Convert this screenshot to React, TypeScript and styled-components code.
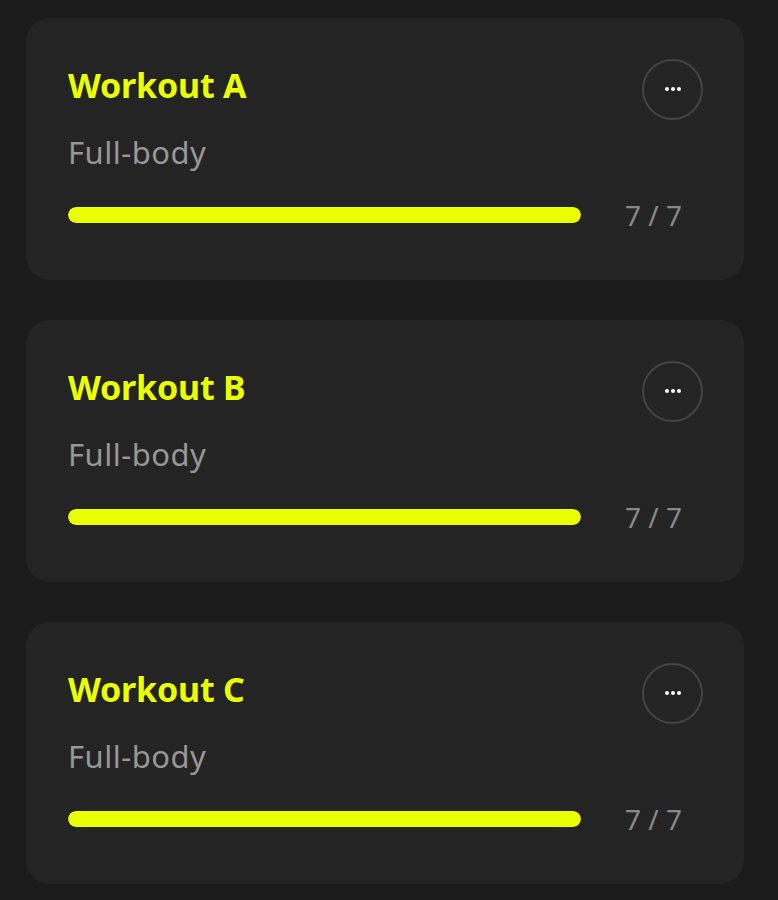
import React from "react";
import styled, { createGlobalStyle } from "styled-components";

const Global = createGlobalStyle`
  html, body { margin: 0; padding: 0; background: #1b1b1b; }
  body { font-family: "Noto Sans", "Open Sans", sans-serif; }
`;

const Page = styled.div`
  display: flex;
  flex-direction: column;
  gap: 40px;
  padding: 18px 34px 16px 26px;
`;

const Card = styled.div`
  background: #242424;
  border-radius: 24px;
  height: 262px;
  box-sizing: border-box;
  padding: 41px 41px 0 42px;
  display: flex;
  flex-direction: column;
`;

const Header = styled.div`
  display: flex;
  justify-content: space-between;
  align-items: center;
  height: 60px;
`;

const Title = styled.h2`
  margin: 0;
  color: #eaff00;
  font-size: 34px;
  font-weight: 700;
  letter-spacing: -0.2px;
  margin-top: -8px;
`;

const MoreButton = styled.button`
  width: 61px;
  height: 61px;
  border-radius: 50%;
  border: 2px solid #454545;
  background: transparent;
  display: flex;
  align-items: center;
  justify-content: center;
  gap: 2px;
  padding: 0;
`;

const Dot = styled.span`
  width: 4px;
  height: 4px;
  border-radius: 50%;
  background: #fff;
`;

const Subtitle = styled.div`
  color: #979797;
  font-size: 31px;
  margin-top: 11px;
  line-height: 44px;
  letter-spacing: 0.5px;
`;

const ProgressRow = styled.div`
  display: flex;
  align-items: center;
  margin-top: 22px;
`;

const Track = styled.div`
  width: 513px;
  height: 16px;
  border-radius: 8px;
  background: #343434;
  overflow: hidden;
`;

const Fill = styled.div`
  height: 100%;
  border-radius: 8px;
  background: #eaff00;
`;

const Count = styled.div`
  color: #888;
  font-size: 28px;
  margin-left: 44px;
`;

const workouts = [
  { name: "Workout A", type: "Full-body", done: 7, total: 7 },
  { name: "Workout B", type: "Full-body", done: 7, total: 7 },
  { name: "Workout C", type: "Full-body", done: 7, total: 7 },
];

export default function App() {
  return (
    <>
      <Global />
      <Page>
        {workouts.map((w) => (
          <Card key={w.name}>
            <Header>
              <Title>{w.name}</Title>
              <MoreButton aria-label="More">
                <Dot />
                <Dot />
                <Dot />
              </MoreButton>
            </Header>
            <Subtitle>{w.type}</Subtitle>
            <ProgressRow>
              <Track>
                <Fill style={{ width: `${(w.done / w.total) * 100}%` }} />
              </Track>
              <Count>
                {w.done} / {w.total}
              </Count>
            </ProgressRow>
          </Card>
        ))}
      </Page>
    </>
  );
}
